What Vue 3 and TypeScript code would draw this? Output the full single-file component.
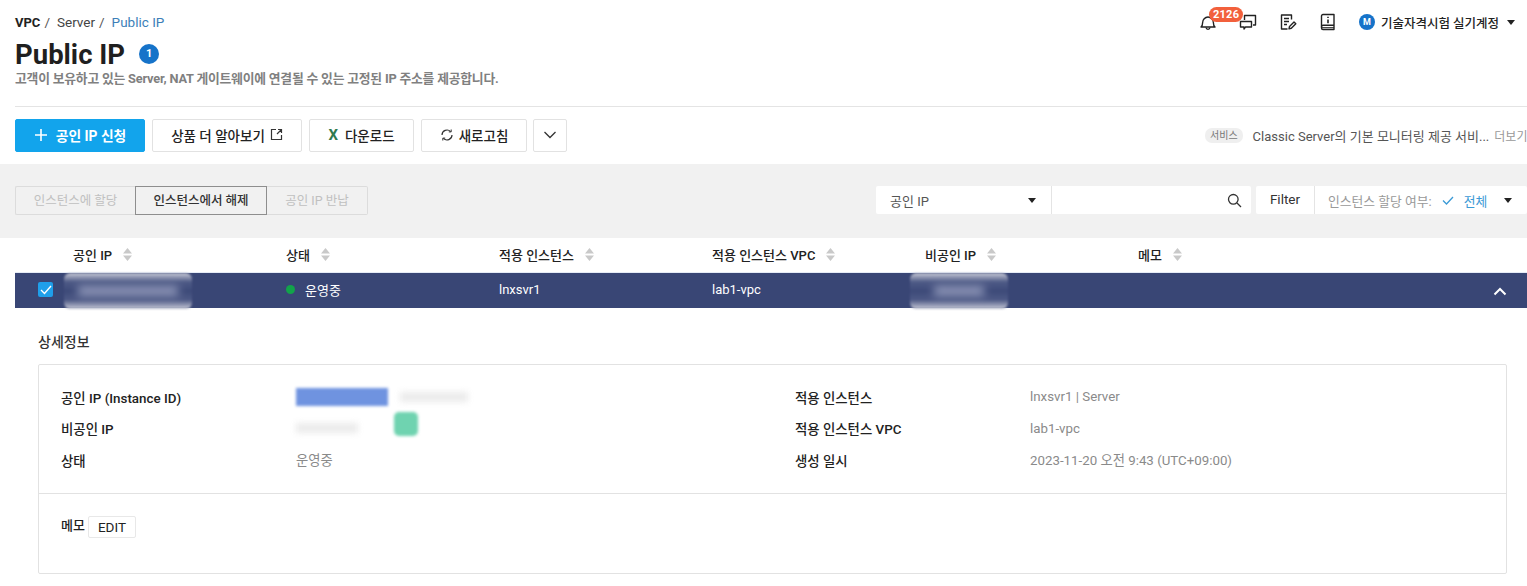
<template>
  <div class="page">
    <header class="head">
      <div class="head-top">
        <div class="head-left">
          <nav class="crumbs">
            <b>VPC</b><span class="sep">/</span><span>Server</span><span class="sep">/</span><span class="current">Public IP</span>
          </nav>
          <div class="title-row">
            <h1>Public IP</h1>
            <span class="count">1</span>
          </div>
          <p class="desc">고객이 보유하고 있는 Server, NAT 게이트웨이에 연결될 수 있는 고정된 IP 주소를 제공합니다.</p>
        </div>
        <div class="top-icons">
          <span class="icon-btn bell">
            <svg width="18" height="18" viewBox="0 0 18 18" fill="none" stroke="#222" stroke-width="1.4" stroke-linejoin="round">
              <path d="M2 14c1.200-1 1.600-2.200 1.600-4.300C3.600 6.800 6 4 9 4s5.400 2.800 5.400 5.700c0 2.100.4 3.300 1.600 4.300z" />
              <path d="M7 14.500c.2 1.200 1 1.800 2 1.800s1.800-.6 2-1.800" />
            </svg>
            <em class="badge">2126</em>
          </span>
          <span class="icon-btn chat">
            <svg width="18" height="18" viewBox="0 0 18 18" fill="none" stroke="#222" stroke-width="1.400" stroke-linejoin="round">
              <path d="M5.500 7V2.500h11V12H14" />
              <path d="M1.500 8.500h11v5.500H6.500l-1.500 2v-2H1.500z" fill="#fff" />
            </svg>
          </span>
          <span class="icon-btn note">
            <svg width="18" height="18" viewBox="0 0 18 18" fill="none" stroke="#222" stroke-width="1.400" stroke-linejoin="round">
              <path d="M12.500 6.500V2H2.500v14h6" />
              <path d="M5 5.500h5M5 8.500h5M5 11.500h3" />
              <path d="M10 15.800l.5-2.300 4.500-4.500 1.800 1.800-4.500 4.500z" />
            </svg>
          </span>
          <span class="icon-btn book">
            <svg width="18" height="18" viewBox="0 0 18 18" fill="none" stroke="#222" stroke-width="1.400" stroke-linejoin="round">
              <path d="M2.500 13.500V3A1.500 1.500 0 0 1 4 1.500h11v15H4A1.500 1.500 0 0 1 2.500 15z" />
              <path d="M2.500 13.500A1.500 1.500 0 0 1 4 12.300h11" />
              <path d="M2.500 14.300h12.500" stroke-width="1" transform="translate(0 .4)" />
              <path d="M9 3.800v1.300M9 6.500v3.800" stroke-width="1.600" />
            </svg>
          </span>
          <span class="account">
            <span class="avatar">M</span>
            <span>기술자격시험 실기계정</span>
            <i class="caret"></i>
          </span>
        </div>
      </div>
      <div class="toolbar">
        <button class="btn primary">
          <svg width="14" height="14" viewBox="0 0 14 14" stroke="#fff" stroke-width="1.600"><path d="M7 1v12M1 7h12" /></svg>
          공인 IP 신청
        </button>
        <button class="btn learn">
          상품 더 알아보기
          <svg width="13" height="13" viewBox="0 0 13 13" fill="none" stroke="#333" stroke-width="1.200"><path d="M6 1.500H1.500v10h10V7M7 6l4.500-4.500M8 1.500h3.500V5" /></svg>
        </button>
        <button class="btn download"><span class="x">X</span>다운로드</button>
        <button class="btn refresh">
          <svg width="14" height="14" viewBox="0 0 14 14" fill="none" stroke="#333" stroke-width="1.200"><path d="M2 7a5 5 0 0 1 8.600-3.400M12 7a5 5 0 0 1-8.600 3.400" /><path d="M11.200 1.500v2.400H8.800M2.800 12.500v-2.400h2.400" stroke-width="1" /></svg>
          새로고침
        </button>
        <button class="btn more">
          <svg width="14" height="8" viewBox="0 0 14 8" fill="none" stroke="#333" stroke-width="1.300"><path d="M1.500 1l5.500 5.500L12.500 1" /></svg>
        </button>
        <div class="notice">
          <span class="tag">서비스</span>
          <span class="notice-text">Classic Server의 기본 모니터링 제공 서비...</span>
          <span class="notice-more">더보기</span>
        </div>
      </div>
    </header>

    <section class="content">
      <div class="actions">
        <div class="seg">
          <span class="seg-item off first">인스턴스에 할당</span>
          <span class="seg-item on">인스턴스에서 해제</span>
          <span class="seg-item off last">공인 IP 반납</span>
        </div>
        <div class="search">
          <div class="search-box">
            <span class="search-type">공인 IP<i class="caret"></i></span>
            <span class="search-input">
              <svg width="15" height="15" viewBox="0 0 15 15" fill="none" stroke="#333" stroke-width="1.300"><circle cx="6.300" cy="6.300" r="4.800" /><path d="M10 10l4 4" /></svg>
            </span>
          </div>
          <div class="filter">
            <span class="filter-label">Filter</span>
            <span class="filter-value">
              <span class="filter-name">인스턴스 할당 여부:</span>
              <svg width="12" height="9" viewBox="0 0 12 9" fill="none" stroke="#3b9ad6" stroke-width="1.300"><path d="M1 4.500L4.500 8 11 1" /></svg>
              <span class="filter-all">전체</span>
              <i class="caret"></i>
            </span>
          </div>
        </div>
      </div>

      <div class="table-head">
        <span v-for="c in columns" :key="c" class="th">
          {{ c }}
          <svg width="9" height="13" viewBox="0 0 9 13" fill="#c9c9c9"><path d="M4.500 0L9 5.500H0zM4.500 13L0 7.500h9z" /></svg>
        </span>
      </div>
      <div class="table-row">
        <span class="check">
          <svg width="12" height="10" viewBox="0 0 12 10" fill="none" stroke="#fff" stroke-width="1.400"><path d="M1 5l3.500 3.500L11 1" /></svg>
        </span>
        <span class="td"><span class="smudge wide"><i></i></span></span>
        <span class="td status"><i class="dot"></i>운영중</span>
        <span class="td">lnxsvr1</span>
        <span class="td">lab1-vpc</span>
        <span class="td"><span class="smudge narrow"><i></i></span></span>
        <span class="td"></span>
        <svg class="collapse" width="14" height="9" viewBox="0 0 14 9" fill="none" stroke="#fff" stroke-width="2"><path d="M1.500 7.500L7 2l5.500 5.500" /></svg>
      </div>
    </section>

    <section class="detail">
      <h2>상세정보</h2>
      <div class="box">
        <div class="info">
          <dl class="col left">
            <dt>공인 IP (Instance ID)</dt>
            <dd class="ip-cell"><i class="blur-blue"></i><i class="blur-gray long"></i></dd>
            <dt>비공인 IP</dt>
            <dd class="ip-cell"><i class="blur-gray short"></i><i class="blur-green"></i></dd>
            <dt>상태</dt>
            <dd>운영중</dd>
          </dl>
          <dl class="col right">
            <dt>적용 인스턴스</dt>
            <dd>lnxsvr1 | Server</dd>
            <dt>적용 인스턴스 VPC</dt>
            <dd>lab1-vpc</dd>
            <dt>생성 일시</dt>
            <dd>2023-11-20 오전 9:43 (UTC+09:00)</dd>
          </dl>
        </div>
        <div class="memo">
          <span class="memo-label">메모</span>
          <button class="edit">EDIT</button>
        </div>
      </div>
    </section>
  </div>
</template>

<script setup lang="ts">
const columns: string[] = ['공인 IP', '상태', '적용 인스턴스', '적용 인스턴스 VPC', '비공인 IP', '메모']
</script>

<style>
html,
body {
  margin: 0;
  overflow: hidden;
  background: #fff;
}
</style>

<style scoped>
.page {
  width: 1527px;
  height: 586px;
  overflow: hidden;
  font-family: Roboto, "Noto Sans CJK KR", sans-serif;
  font-size: 13px;
  color: #222;
}

.head {
  height: 164px;
  padding-left: 15px;
  box-sizing: border-box;
}
.head-top {
  display: flex;
  justify-content: space-between;
  height: 106px;
  border-bottom: 1px solid #e4e4e4;
}
.crumbs {
  display: flex;
  padding-top: 14px;
  height: 17px;
  line-height: 17px;
  font-size: 13.500px;
  color: #444;
}
.crumbs b {
  color: #222;
  font-weight: 700;
  font-size: 13px;
}
.sep {
  margin: 0 7px 0 4px;
  color: #555;
}
.current {
  color: #3d7fb8;
}
.title-row {
  display: flex;
  align-items: center;
  margin-top: 3px;
  height: 40px;
}
h1 {
  margin: 0;
  font-size: 27.500px;
  font-weight: 700;
  color: #1f1f1f;
}
.count {
  width: 20px;
  height: 20px;
  margin-left: 14px;
  border-radius: 50%;
  background: #1673c9;
  color: #fff;
  font-size: 11px;
  font-weight: 700;
  text-align: center;
  line-height: 20px;
}
.desc {
  margin: -2px 0 0;
  height: 20px;
  line-height: 14px;
  font-size: 12.800px;
  font-weight: 700;
  color: #808080;
  letter-spacing: -0.2px;
}

.top-icons {
  display: flex;
  align-items: flex-start;
  padding: 13px 12px 0 0;
  height: 18px;
}
.icon-btn {
  position: relative;
  display: block;
  width: 18px;
  height: 18px;
}
.chat {
  margin-left: 22px;
}
.note {
  margin-left: 22px;
}
.book {
  margin-left: 22px;
}
.badge {
  position: absolute;
  left: 10px;
  top: -6px;
  height: 15px;
  padding: 0 4px;
  border-radius: 8px;
  background: #f2603c;
  color: #fff;
  font-size: 11px;
  font-style: normal;
  font-weight: 700;
  line-height: 15px;
  letter-spacing: 0.3px;
}
.account {
  display: flex;
  align-items: center;
  height: 18px;
  margin-left: 22px;
  font-size: 12.500px;
  font-weight: 500;
  color: #222;
}
.avatar {
  width: 16px;
  height: 16px;
  margin-right: 6px;
  border-radius: 50%;
  background: #1673c9;
  color: #fff;
  font-size: 9px;
  font-weight: 700;
  text-align: center;
  line-height: 16px;
}
.caret {
  display: inline-block;
  width: 0;
  height: 0;
  border-left: 4.500px solid transparent;
  border-right: 4.500px solid transparent;
  border-top: 5px solid #222;
}
.account .caret {
  margin-left: 8px;
}

.toolbar {
  display: flex;
  align-items: center;
  gap: 7px;
  height: 33px;
  margin-top: 12px;
}
.btn {
  display: flex;
  align-items: center;
  justify-content: center;
  height: 33px;
  padding: 0 0 2px;
  box-sizing: border-box;
  border: 1px solid #e2e2e2;
  border-radius: 2px;
  background: #fff;
  color: #222;
  font: inherit;
  font-weight: 500;
  font-size: 13.500px;
  gap: 5px;
}
.primary {
  width: 130px;
  gap: 8px;
  border-color: #12a4ec;
  background: #12a4ec;
  color: #fff;
  font-weight: 700;
  font-size: 13.800px;
}
.learn {
  width: 150px;
}
.download {
  width: 105px;
}
.x {
  margin-right: 2px;
  color: #2f7a4f;
  font-size: 15px;
  font-weight: 700;
}
.refresh {
  width: 106px;
}
.more {
  width: 34px;
  margin-left: -1px;
}
.notice {
  display: flex;
  align-items: center;
  margin-left: auto;
  width: 322px;
  flex: none;
  white-space: nowrap;
  overflow: hidden;
  font-size: 13px;
  color: #555;
}
.tag {
  padding: 0 5px;
  height: 15px;
  line-height: 15px;
  border-radius: 7px;
  background: #efefef;
  color: #777;
  font-size: 10px;
  margin-right: 10px;
}
.notice-more {
  margin-left: 5px;
  font-size: 12px;
  color: #999;
}

.content {
  height: 144px;
  padding: 22px 0 0 15px;
  box-sizing: border-box;
  background: linear-gradient(#f1f1f1 74px, #fff 74px);
}
.actions {
  display: flex;
  justify-content: space-between;
  height: 30px;
  margin-bottom: 22px;
}
.seg {
  display: flex;
  height: 29px;
}
.seg-item {
  display: block;
  box-sizing: border-box;
  text-align: center;
  line-height: 27px;
  border: 1px solid #dcdcdc;
  font-size: 12.500px;
}
.off {
  color: #c0c0c0;
}
.first {
  width: 120px;
  border-right: 0;
  border-radius: 2px 0 0 2px;
}
.on {
  width: 132px;
  border-color: #8e8e8e;
  color: #333;
  font-weight: 500;
}
.last {
  width: 101px;
  border-left: 0;
  border-radius: 0 2px 2px 0;
}
.search {
  display: flex;
  gap: 5px;
  height: 28px;
  width: 651px;
  flex: none;
  overflow: hidden;
}
.search-box,
.filter {
  display: flex;
  background: #fff;
  border-radius: 2px;
  height: 28px;
}
.search-box {
  width: 375px;
  flex: none;
}
.search-type {
  display: flex;
  align-items: center;
  justify-content: space-between;
  box-sizing: border-box;
  width: 176px;
  padding: 0 15px 0 14px;
  border-right: 1px solid #e4e4e4;
  color: #555;
  font-size: 13px;
}
.search-input {
  flex: 1;
  display: flex;
  align-items: center;
  justify-content: flex-end;
  padding-right: 9px;
}
.filter {
  flex: 1;
  white-space: nowrap;
}
.filter-label {
  width: 58px;
  flex: none;
  text-align: center;
  line-height: 26px;
  border-right: 1px solid #e4e4e4;
  font-size: 13.500px;
  color: #333;
}
.filter-value {
  display: flex;
  align-items: center;
  padding-left: 13px;
  font-size: 12.800px;
  color: #999;
}
.filter-name {
  margin-right: 10px;
}
.filter-all {
  margin: 0 17px 0 10px;
  color: #3b9ad6;
}

.table-head {
  display: grid;
  grid-template-columns: repeat(6, 213px);
  height: 35px;
  padding-left: 58px;
  align-items: center;
  border-bottom: 1px solid #e6ecf6;
  box-sizing: border-box;
  padding-bottom: 2px;
}
.th {
  display: flex;
  align-items: center;
  gap: 11px;
  font-weight: 500;
  font-size: 13px;
  color: #222;
}
.table-row {
  position: relative;
  display: grid;
  grid-template-columns: repeat(6, 213px);
  align-items: start;
  height: 35px;
  padding-left: 58px;
  background: #394675;
  color: #fff;
  font-size: 13px;
}
.check {
  position: absolute;
  left: 23px;
  top: 9px;
  display: flex;
  align-items: center;
  justify-content: center;
  width: 15px;
  height: 15px;
  border-radius: 2px;
  background: #1f9fea;
}
.td {
  display: flex;
  align-items: center;
  height: 33px;
}
.smudge {
  display: flex;
  align-items: center;
  justify-content: center;
  height: 36px;
  margin-top: 2px;
  background: linear-gradient(#c7c9d6, #4e5a86 25%, #3d4a79 50%, #4e5a86 75%, #c7c9d6);
  border-radius: 6px;
  filter: blur(1px);
}
.smudge i {
  display: block;
  height: 10px;
  background: #8f97b8;
  filter: blur(4px);
}
.wide {
  width: 128px;
  margin-left: -9px;
}
.wide i {
  width: 100px;
}
.narrow {
  width: 98px;
  margin-left: -15px;
}
.narrow i {
  width: 50px;
}
.status .dot {
  width: 9px;
  height: 9px;
  margin-right: 10px;
  border-radius: 50%;
  background: #12a34a;
}
.collapse {
  position: absolute;
  right: 20px;
  top: 14px;
}

.detail {
  padding: 0 20px 0 38px;
}
h2 {
  margin: 0;
  padding-top: 24px;
  height: 32px;
  line-height: 20px;
  font-size: 14px;
  font-weight: 500;
  color: #333;
}
.box {
  box-sizing: border-box;
  height: 210px;
  border: 1px solid #e2e2e2;
  border-radius: 2px;
}
.info {
  display: grid;
  grid-template-columns: 734px 1fr;
  height: 129px;
  padding: 16px 0 0 22px;
  box-sizing: border-box;
  border-bottom: 1px solid #e2e2e2;
}
.col {
  display: grid;
  grid-template-rows: repeat(3, 31.500px);
  margin: 0;
  align-items: center;
}
.left {
  grid-template-columns: 235px 1fr;
}
.right {
  grid-template-columns: 235px 1fr;
}
dt {
  font-weight: 500;
  font-size: 13.400px;
  color: #222;
}
dd {
  margin: 0;
  color: #8a8a8a;
  font-size: 13.300px;
}
.ip-cell {
  display: flex;
  align-items: center;
}
.blur-blue {
  width: 92px;
  height: 18px;
  background: #6f93e0;
  filter: blur(1.500px);
}
.blur-gray {
  display: block;
  height: 10px;
  background: #ebebeb;
  filter: blur(3px);
}
.long {
  width: 68px;
  margin-left: 12px;
}
.short {
  width: 62px;
}
.blur-green {
  width: 24px;
  height: 24px;
  margin: -8px 0 0 36px;
  border-radius: 5px;
  background: #6fd3b0;
  filter: blur(1.500px);
}
.memo {
  display: flex;
  align-items: flex-start;
  padding: 22px 0 0 22px;
}
.memo-label {
  font-weight: 500;
  font-size: 13px;
  line-height: 20px;
}
.edit {
  height: 22px;
  width: 48px;
  margin-left: 3px;
  padding: 0;
  border: 1px solid #e8e8e8;
  border-radius: 2px;
  background: #fff;
  color: #222;
  font: inherit;
  font-size: 13.500px;
}
</style>
